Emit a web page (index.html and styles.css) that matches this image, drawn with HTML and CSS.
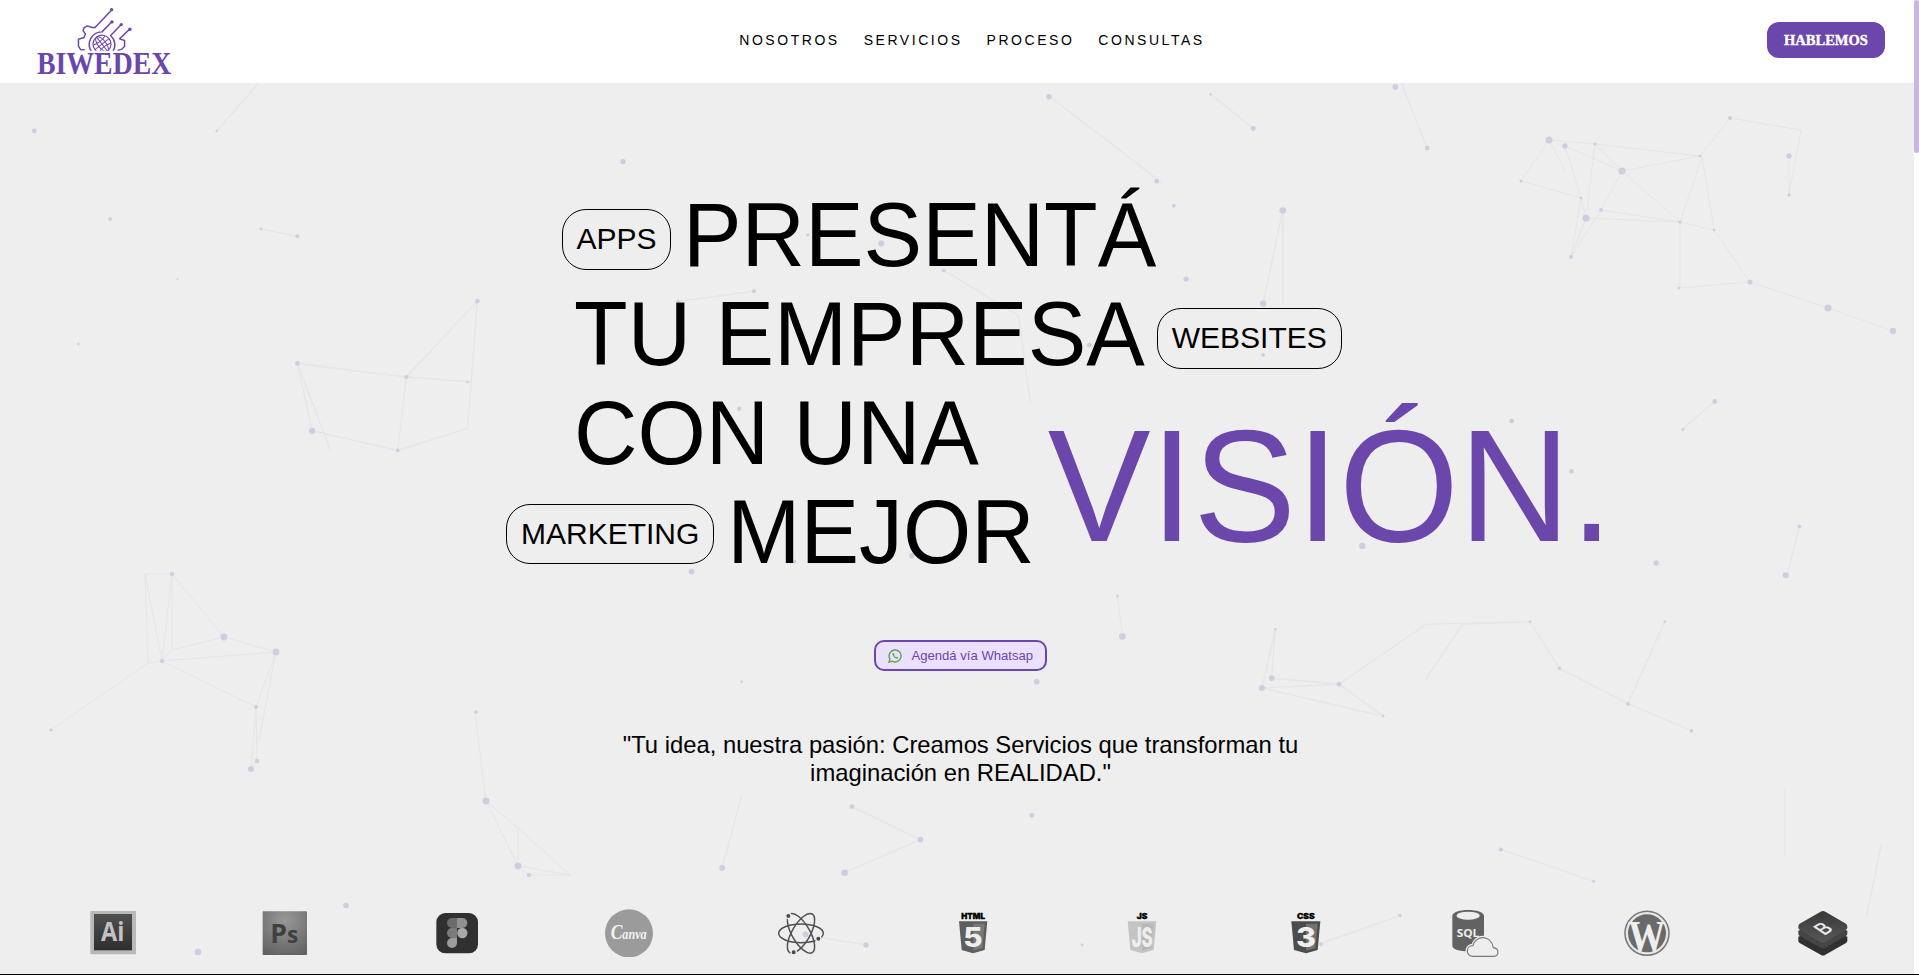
FILE: index.html
```html
<!DOCTYPE html>
<html lang="es">
<head>
<meta charset="utf-8">
<title>Biwedex</title>
<link rel="stylesheet" href="styles.css">
</head>
<body>
<header class="header">
  <svg class="logo" viewBox="110 20 405 205">
    <defs><clipPath id="dome"><rect x="225" y="15" width="175" height="137"/></clipPath></defs>
    <g fill="none" stroke="#6b46ab" stroke-width="4.5" stroke-linejoin="round" clip-path="url(#dome)">
      <path d="M253 149H241L234 138V117L251 112L255 101L248 92L251 82L261 77L275 82H284L332 31"/>
      <path d="M273 154A38 38 0 0 1 305 95L333 66"/>
      <path d="M338 154A38 38 0 0 0 331 106L361 75"/>
      <path d="M387 88L358 116L373 121V138L365 147L352 151"/>
      <g stroke-width="3" transform="rotate(-38 305 132)">
        <circle cx="305" cy="132" r="27" stroke-width="3.5"/><ellipse cx="305" cy="132" rx="12" ry="27"/><path d="M305 105V159M278 132H332M283 118Q305 126 327 118M283 146Q305 138 327 146"/>
      </g>
    </g>
    <g fill="#6b46ab"><circle cx="334" cy="28" r="5"/><circle cx="335" cy="65" r="5"/><circle cx="363" cy="73" r="5"/><circle cx="389" cy="87" r="5"/></g>
    <text class="logo-name" x="109" y="221" textLength="405" lengthAdjust="spacingAndGlyphs">BIWEDEX</text>
  </svg>
  <nav class="nav"><a>NOSOTROS</a><a>SERVICIOS</a><a>PROCESO</a><a>CONSULTAS</a></nav>
  <a class="talk">HABLEMOS</a>
</header>

<main class="hero">
  <svg class="particles" viewBox="0 83 1914 891">
    <g class="links">
      <path d="M1549 140L1595 144L1622 171L1565 146M1549 140L1521 181L1581 198L1586 218L1571 257L1581 198L1565 146M1549 140L1565 170M1595 144L1587 210M1622 171L1601 210L1571 257M1622 171L1700 156L1595 144M1622 171L1680 222L1601 210M1680 222L1714 230L1702 157L1680 222V288L1750 282L1828 308L1893 331M1586 218L1680 222M1730 118L1801 130L1789 195V156M1700 156L1730 118M1714 230L1750 282"/>
      <path d="M145 574H172V650L224 637L276 652L256 707L257 760L251 769L256 707M145 574L148 663L162 661L172 650M145 574L162 661L276 652M172 574L162 661M172 574L224 637M148 663L51 730M162 661L256 707M276 652L259 740"/>
      <path d="M475 712L486 801L518 828V866L529 875H570L518 828M486 801L518 866L570 875"/>
    </g>
    <g class="links" transform="scale(1.224)">
      <path d="M390 246L332 308L243 297L255 352L325 368L332 308L385 312L382 350L325 368M390 246L385 312M243 297L270 368M177 107L213 66M213 187L243 193M554 246L616 238M770 220L832 258L842 330M858 79L950 150M989 77L1024 105M1145 68L1166 121M1032 248L1048 171M1048 171V248M1042 514L1039 554L1094 559L1130 585M1031 562L1094 559L1165 510L1250 508L1274 546L1330 575L1382 597M1042 514L1031 562M1031 562L1130 585M1250 508L1195 510L1165 555M1360 508L1330 575M1458 645V700M1537 690L1525 748M1226 694L1302 720M1470 430L1460 470M1375 350L1401 328M1067 775L1144 748M658 764L707 772M590 709L606 650M696 659L752 686L690 713M913 487L917 520"/>
    </g>
    <g class="dots">
      <circle cx="1549" cy="140" r="3.5"/><circle cx="1565" cy="146" r="2.7"/><circle cx="1622" cy="171" r="3.6"/><circle cx="1586" cy="218" r="3.6"/><circle cx="1601" cy="210" r="2"/><circle cx="1571" cy="257" r="2"/><circle cx="1730" cy="118" r="2"/><circle cx="1789" cy="156" r="2.7"/><circle cx="1789" cy="195" r="1.5"/><circle cx="1750" cy="282" r="2.5"/><circle cx="1828" cy="308" r="3.5"/><circle cx="1893" cy="331" r="3.2"/><circle cx="1521" cy="181" r="1.5"/><circle cx="1680" cy="222" r="1.5"/><circle cx="1595" cy="144" r="1.5"/><circle cx="1700" cy="156" r="1.5"/><circle cx="1679" cy="288" r="1.3"/><circle cx="1581" cy="198" r="1.3"/><circle cx="1714" cy="230" r="1.3"/>
      <circle cx="172" cy="574" r="2.2"/><circle cx="224" cy="637" r="3.4"/><circle cx="276" cy="652" r="3.4"/><circle cx="162" cy="661" r="2.2"/><circle cx="256" cy="707" r="2"/><circle cx="257" cy="761" r="2.3"/><circle cx="251" cy="769" r="3"/><circle cx="51" cy="730" r="1.6"/><circle cx="476" cy="712" r="1.8"/><circle cx="486" cy="801" r="3.4"/><circle cx="518" cy="866" r="3.4"/><circle cx="529" cy="875" r="2.2"/><circle cx="198" cy="952" r="3.2"/><circle cx="346" cy="905.500" r="2.8"/><circle cx="805.500" cy="934.500" r="3"/><circle cx="866" cy="945" r="2.7"/><circle cx="1400" cy="915.500" r="1.7"/><circle cx="1321" cy="944" r="2"/>
    </g>
    <g class="dots" transform="scale(1.224)">
      <circle cx="28" cy="107" r="2"/><circle cx="177" cy="107" r="1"/><circle cx="90" cy="179" r="1.600"/><circle cx="213" cy="187" r="1"/><circle cx="243" cy="193" r="1.600"/><circle cx="145" cy="228" r=".8"/><circle cx="64" cy="281" r="1"/><circle cx="390" cy="246" r="2"/><circle cx="243" cy="297" r="2"/><circle cx="332" cy="308" r="1.700"/><circle cx="255" cy="352" r="2.600"/><circle cx="325" cy="368" r="1.500"/><circle cx="382" cy="312" r="1"/><circle cx="509" cy="132" r="2.200"/><circle cx="616" cy="238" r="1.600"/><circle cx="554" cy="246" r="1.300"/><circle cx="720" cy="199" r="2.500"/><circle cx="660" cy="192" r="1.300"/><circle cx="771" cy="221" r="1.500"/><circle cx="857" cy="79" r="2.200"/><circle cx="945" cy="148" r="2"/><circle cx="959" cy="168" r="1.600"/><circle cx="989" cy="77" r="1"/><circle cx="1024" cy="105" r="2"/><circle cx="1048" cy="172" r="2.700"/><circle cx="969" cy="228" r="2.200"/><circle cx="1032" cy="248" r="2.600"/><circle cx="1032" cy="290" r="1.500"/><circle cx="890" cy="282" r="2"/><circle cx="1140" cy="71" r="2.300"/><circle cx="1166" cy="121" r="2"/><circle cx="604" cy="334" r="1.800"/><circle cx="497" cy="378" r="1.600"/><circle cx="565" cy="467" r="2.400"/><circle cx="745" cy="454" r="2.200"/><circle cx="649" cy="459" r="1.600"/><circle cx="1113" cy="446" r="2.600"/><circle cx="1235" cy="344" r="2"/><circle cx="1284" cy="385" r="1.800"/><circle cx="1401" cy="328" r="2"/><circle cx="1375" cy="351" r="1.200"/><circle cx="1470" cy="430" r="1.500"/><circle cx="1353" cy="460" r="2.200"/><circle cx="1459" cy="470" r="2.500"/><circle cx="917" cy="520" r="2.700"/><circle cx="913" cy="487" r="1"/><circle cx="847" cy="557" r="2.300"/><circle cx="1031" cy="562" r="2.400"/><circle cx="1039" cy="554" r="2.400"/><circle cx="1042" cy="514" r="1"/><circle cx="1094" cy="559" r="2"/><circle cx="1130" cy="585" r="1"/><circle cx="1250" cy="508" r="1"/><circle cx="1274" cy="546" r="1.400"/><circle cx="1330" cy="575" r="1.500"/><circle cx="1382" cy="597" r="1.500"/><circle cx="1360" cy="508" r="1"/><circle cx="606" cy="557" r="1"/><circle cx="696" cy="659" r="2"/><circle cx="843" cy="666" r="2"/><circle cx="752" cy="686" r="2.300"/><circle cx="590" cy="709" r="2.400"/><circle cx="690" cy="713" r="2.700"/><circle cx="1226" cy="694" r="1.700"/><circle cx="1302" cy="720" r="1.200"/><circle cx="884" cy="772" r="1.200"/>
    </g>
  </svg>

  <h1 class="title">
    <span class="row row-a"><span class="pill">APPS</span><span class="word">PRESENTÁ</span></span>
    <span class="row row-b"><span class="word">TU EMPRESA</span><span class="pill">WEBSITES</span></span>
    <span class="row row-c"><span class="word">CON UNA</span></span>
    <span class="row row-d"><span class="pill">MARKETING</span><span class="word">MEJOR</span><span class="vision">VISIÓN.</span></span>
  </h1>

  <a class="whatsapp">
    <svg class="wa-icon" viewBox="0 0 14 14" fill="none" stroke="#5fa84a"><path d="M1 13.200L1.900 9.900A6 6 0 1 1 4.200 12.200Z" stroke-width="1.400"/><path d="M4.700 4C4 6 7 10 9.700 9.500C10.800 9 10.200 8.600 8.900 8C8.200 9 6 7.200 6.100 6.100C6.500 5.500 5.600 3.500 4.700 4Z" fill="#5fa84a" stroke-width=".3"/></svg>
    <span>Agendá vía Whatsap</span>
  </a>

  <p class="quote">"Tu idea, nuestra pasión: Creamos Servicios que transforman tu imaginación en REALIDAD."</p>

  <div class="tools">
    <svg width="48" height="48" viewBox="87 57 144 144">
      <defs><linearGradient id="ai" x2="0" y2="1"><stop stop-color="#505050"/><stop offset="1" stop-color="#2e2e2e"/></linearGradient></defs>
      <rect x="91" y="63" width="137" height="130" rx="2" fill="#b9b9b9"/><rect x="102" y="72" width="114" height="109" fill="url(#ai)"/>
      <text class="adobe" x="123" y="153" font-size="80" textLength="70" lengthAdjust="spacingAndGlyphs" fill="#c2c2c2">Ai</text>
    </svg>
    <svg width="48" height="48" viewBox="604 57 144 144">
      <defs><radialGradient id="ps" cx=".5" cy=".2" r=".9"><stop stop-color="#989898"/><stop offset="1" stop-color="#606060"/></radialGradient></defs>
      <rect x="609" y="64" width="133" height="131" rx="2" fill="url(#ps)"/>
      <text class="adobe" x="632" y="160" font-size="82" textLength="84" lengthAdjust="spacingAndGlyphs" fill="#404040">P<tspan font-size="70">s</tspan></text>
    </svg>
    <svg width="48" height="48" viewBox="1119 57 144 144">
      <rect x="1129" y="69" width="125" height="121" rx="27" fill="#303030"/>
      <path d="M1191 84H1176A15 15 0 0 0 1176 114H1191Z" fill="#6b6b6b"/><path d="M1191 84H1207A15 15 0 0 1 1207 114H1191Z" fill="#909090"/>
      <path d="M1191 114H1176A15 15 0 0 0 1176 144H1191Z" fill="#7b7b7b"/><circle cx="1207" cy="129" r="15.500" fill="#a8a8a8"/>
      <path d="M1191 144H1176A15 15 0 1 0 1191 159Z" fill="#9c9c9c"/>
    </svg>
    <svg width="48" height="48" viewBox="135 57 144 144">
      <circle cx="207" cy="130" r="72" fill="#9b9b9b"/>
      <text class="script" x="152" y="147" textLength="108" lengthAdjust="spacingAndGlyphs"><tspan font-size="62">C</tspan>anva</text>
    </svg>
    <svg width="48" height="48" viewBox="652 57 144 144">
      <g fill="none" stroke="#505050" stroke-width="4.5">
        <ellipse cx="724" cy="130" rx="67" ry="28"/><ellipse cx="724" cy="130" rx="67" ry="27" transform="rotate(60 724 130)"/><ellipse cx="724" cy="130" rx="67" ry="27" transform="rotate(-60 724 130)"/>
      </g>
      <g fill="#484848" stroke="#eee" stroke-width="4"><circle cx="686" cy="78" r="8"/><circle cx="776" cy="146" r="8"/><circle cx="702" cy="187" r="8"/></g>
    </svg>
    <svg width="48" height="48" viewBox="1165 57 144 144">
      <text class="tag" x="1202" y="87" textLength="71" lengthAdjust="spacingAndGlyphs">HTML</text>
      <path d="M1195 94H1280L1272 180L1237 190L1203 180Z" fill="#5e5e5e"/><path d="M1238 101H1272L1265 174L1238 182Z" fill="#797979"/>
      <text class="mark" x="1208" y="171" font-size="80" textLength="58" lengthAdjust="spacingAndGlyphs">5</text>
    </svg>
    <svg width="42" height="48" viewBox="94 57 126 144">
      <text class="tag" x="141" y="87" textLength="32" lengthAdjust="spacingAndGlyphs">JS</text>
      <path d="M114 94H200L192 180L157 190L122 180Z" fill="#c4c4c4"/><path d="M157 101H192L185 174L157 182Z" fill="#b7b7b7"/>
      <text class="mark" x="126" y="171" font-size="83" textLength="63" lengthAdjust="spacingAndGlyphs">JS</text>
    </svg>
    <svg width="38" height="48" viewBox="593 57 114 144">
      <text class="tag" x="623" y="87" textLength="53" lengthAdjust="spacingAndGlyphs">CSS</text>
      <path d="M606 94H693L685 180L650 190L614 180Z" fill="#4c4c4c"/><path d="M650 101H685L678 174L650 182Z" fill="#737373"/>
      <text class="mark" x="620" y="171" font-size="83" textLength="60" lengthAdjust="spacingAndGlyphs">3</text>
    </svg>
    <svg width="52" height="48" viewBox="1077 57 156 144">
      <path d="M1087 78C1087 54 1182 54 1182 78V168C1182 189 1087 189 1087 168Z" fill="#626262"/><ellipse cx="1134.500" cy="77" rx="35" ry="12" fill="#eee"/>
      <text class="sql" x="1100" y="140" textLength="68" lengthAdjust="spacingAndGlyphs">SQL</text>
      <path d="M1148 199C1125 198 1128 166 1149 167C1155 136 1203 132 1210 173C1228 175 1228 198 1212 199Z" fill="#eee" stroke="#eee" stroke-width="11"/>
      <path d="M1148 199C1125 198 1128 166 1149 167C1155 136 1203 132 1210 173C1228 175 1228 198 1212 199Z" fill="#eee" stroke="#7a7a7a" stroke-width="3.500"/>
    </svg>
    <svg width="44" height="48" viewBox="135 57 132 144" overflow="visible">
      <circle cx="201" cy="130" r="66" fill="#e7e7e7" stroke="#777" stroke-width="4.500"/><circle cx="201" cy="130" r="57" fill="#6a6a6a"/>
      <text class="wp" x="145" y="183" textLength="111" lengthAdjust="spacingAndGlyphs">W</text>
    </svg>
    <svg width="60" height="48" viewBox="641 57 180 144">
      <defs><linearGradient id="bs" x2="0" y2="1"><stop stop-color="#383838"/><stop offset="1" stop-color="#585858"/></linearGradient></defs>
      <path d="M657 140L731 110L804 140V152Q804 156 800 159L738 194Q731 199 724 194L661 159Q657 156 657 152Z" fill="#303030"/>
      <path d="M657 122L731 90L804 122V131Q804 135 800 138L738 173Q731 178 724 173L661 138Q657 135 657 131Z" fill="#454545"/>
      <path d="M661 101L724 65Q731 61 738 65L800 101Q804 104 804 109V113Q804 116 800 119L738 156Q731 160 724 156L661 119Q657 116 657 113V109Q657 104 661 101Z" fill="url(#bs)"/>
      <text class="bs" transform="matrix(.8 -.5 .86 .58 737 135)" x="-4" y="0">B</text>
    </svg>
  </div>
</main>
<div class="next"></div>
<div class="scrollbar"><div class="thumb"></div></div>
</body>
</html>
```
FILE: styles.css
```css
* { box-sizing: border-box; }
body {
  margin: 0;
  height: 975px;
  overflow: hidden;
  background: #fff;
  color: #000;
  font-family: "Liberation Sans", Arial, sans-serif;
}
.header {
  display: grid;
  grid-template-columns: 1fr auto 1fr;
  align-items: center;
  width: 1914px;
  height: 83px;
  padding: 0 29px 0 37px;
}
.logo { width: 135px; height: 68px; margin-top: -1px; overflow: visible; }
.logo-name {
  font: bold 92px "Liberation Serif", serif;
  fill: #6b46ab;
}
.nav {
  display: flex;
  gap: 24px;
  margin-left: 22px;
  margin-top: -3px;
  font-size: 14px;
  letter-spacing: 2.54px;
}
.talk {
  justify-self: end;
  width: 118px;
  height: 36px;
  margin-top: -3px;
  border-radius: 12px;
  background: #6b46ab;
  color: #fff;
  font: bold 14.5px/36px "Liberation Serif", serif;
  text-align: center;
  -webkit-text-stroke: 0.4px #fff;
}
.hero {
  position: relative;
  display: flex;
  flex-direction: column;
  align-items: center;
  width: 1914px;
  height: 891px;
  padding: 105px 0 17px;
  background: #eee;
}
.particles {
  position: absolute;
  inset: 0;
  width: 1914px;
  height: 891px;
}
.links { fill: none; stroke: #c9c9df; stroke-width: 1; opacity: 0.24; }
.dots { fill: #cfcde2; }
.title, .whatsapp, .quote, .tools { position: relative; }
.title {
  width: 100%;
  margin: 0;
  font-size: 87.8px;
  font-weight: 400;
  line-height: 99px;
}
.row { display: flex; align-items: center; height: 99px; white-space: nowrap; }
.row-a { padding-left: 562px; gap: 12px; }
.row-b { padding-left: 574px; gap: 12px; }
.row-c { padding-left: 574px; }
.row-d { padding-left: 506px; gap: 13px; }
.word {
  margin-top: -3px;
  transform: scaleY(1.03);
  transform-origin: 0 80px;
}
.pill {
  height: 61px;
  margin-top: 4px;
  padding: 0 13.5px;
  border: 1px solid #000;
  border-radius: 24px;
  font-size: 30px;
  line-height: 58px;
}
.row-b .pill { padding: 0 14px; }
.row-d .pill { height: 60px; margin-top: -2px; padding: 0 14px; }
.vision {
  margin-top: -95px;
  color: #6b46ab;
  font-size: 154.2px;
  transform: scaleY(1.035);
  transform-origin: 0 103px;
}
.whatsapp {
  display: flex;
  align-items: center;
  gap: 10px;
  width: 173px;
  height: 31px;
  margin: 56px 0 0 6px;
  padding-left: 12px;
  border: 2px solid #6b46ab;
  border-radius: 10px;
  background: #ebe0ff;
  color: #6b46ab;
  font-size: 13.1px;
}
.wa-icon { width: 14px; height: 14px; }
.quote {
  width: 700px;
  margin: 60px 0 0 7px;
  font-size: 23.8px;
  line-height: 28px;
  text-align: center;
}
.tools {
  display: flex;
  gap: 124px;
  width: 100%;
  margin-top: auto;
  padding-left: 89px;
}
.tools svg { flex: none; }
.adobe { font-family: "Open Sans", sans-serif; font-weight: 700; }
.script { font: italic bold 43px "Liberation Serif", serif; fill: #f4f4f4; }
.tag { font: 900 23px Inter, sans-serif; fill: #000; stroke: #000; }
.mark { font-family: Inter, sans-serif; font-weight: 800; fill: #eee; }
.sql { font: bold 34px "Open Sans", sans-serif; fill: #eee; }
.wp { font: bold 132px "Liberation Serif", serif; fill: #eee; }
.bs { font: 400 58px Inter, sans-serif; fill: #eee; stroke: #eee; }
.next { height: 1px; background: #000; }
.scrollbar {
  position: absolute;
  top: 0;
  right: 0;
  width: 5px;
  height: 974px;
  background: #fff;
}
.thumb { height: 153px; border-radius: 3px; background: #c8b7e0; }
```
